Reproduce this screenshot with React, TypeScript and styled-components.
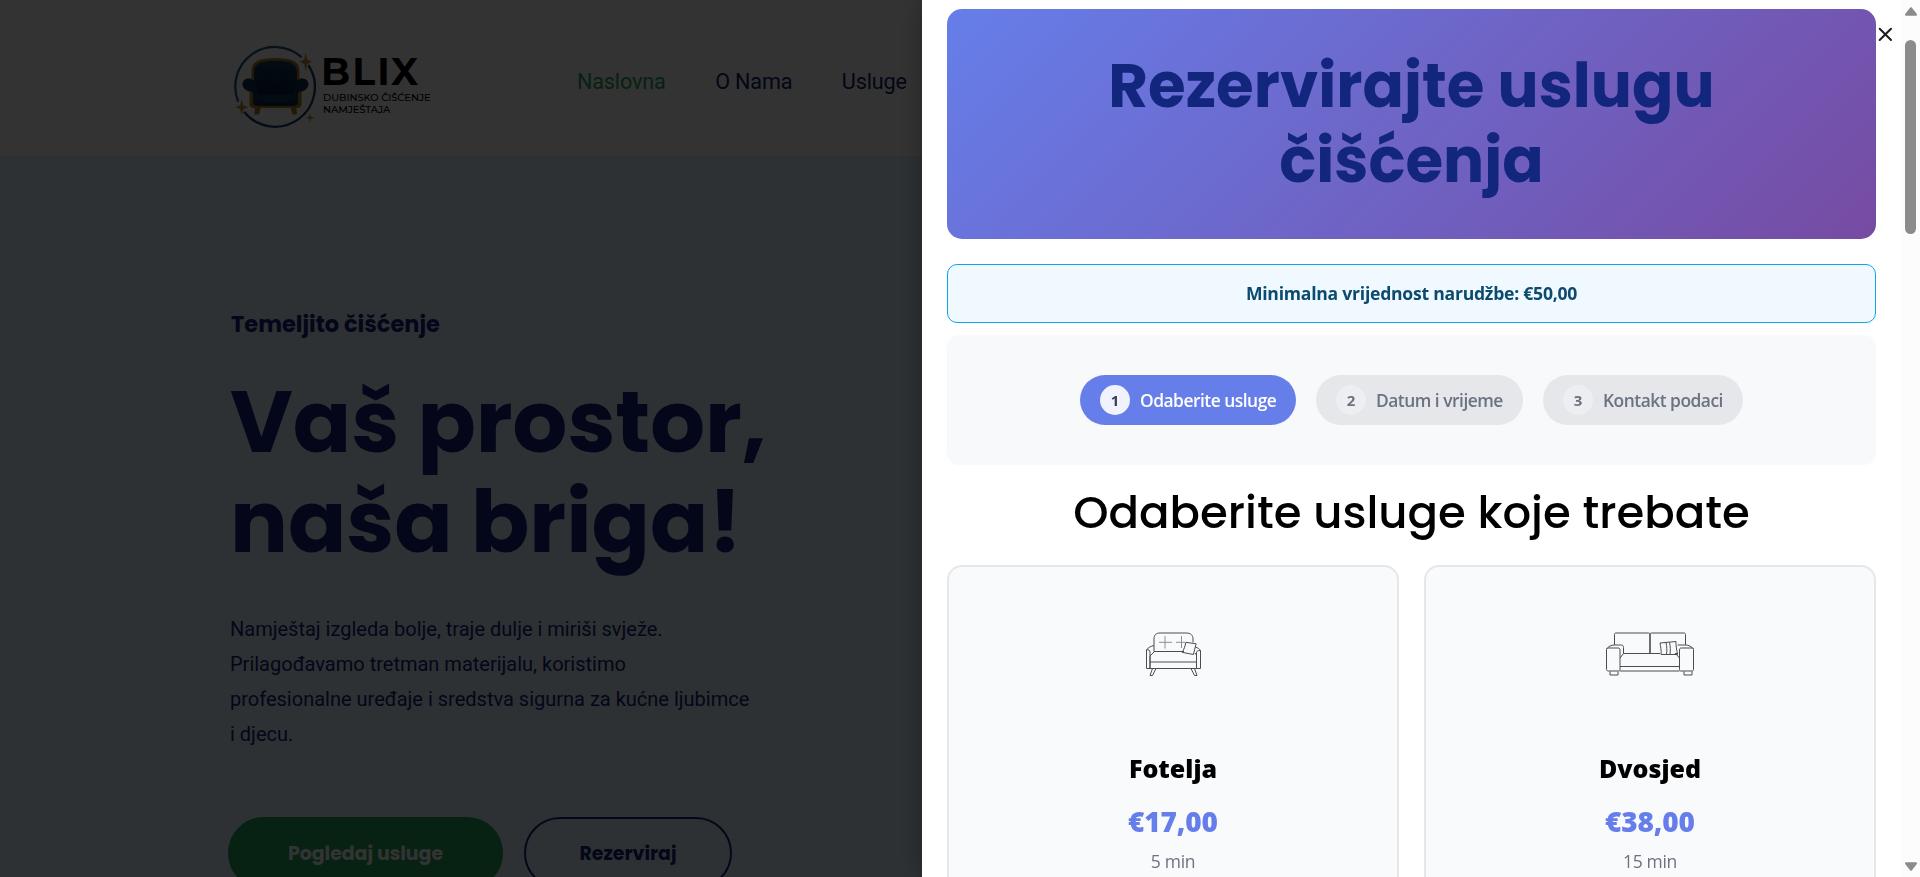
import React from 'react';
import styled, { createGlobalStyle } from 'styled-components';

const display = '"Poppins", "Inter", sans-serif';
const body = '"Roboto", sans-serif';
const system = '"Open Sans", "Noto Sans", sans-serif';

const GlobalStyle = createGlobalStyle`
  *, *::before, *::after { box-sizing: border-box; }
  html, body { margin: 0; padding: 0; height: 877px; overflow: hidden; background: #fff; }
  h1, h2, h3, p { margin: 0; }
`;

/* ---------- landing page ---------- */

const Page = styled.div`
  height: 877px;
  display: flex;
  flex-direction: column;
  overflow: hidden;
  color: #13267e;
`;

const Header = styled.header`
  flex: none;
  height: 156px;
  padding-left: 232px;
  display: flex;
  align-items: flex-start;
  background: #fff;
`;

const Brand = styled.div`
  display: flex;
  width: 345px;
  padding-top: 43px;
`;

const BrandWords = styled.div`
  margin-left: 7px;
  padding-top: 9px;
  color: #000;
  font-family: "Montserrat", "Inter", sans-serif;
  white-space: nowrap;
`;

const BrandName = styled.div`
  margin-left: -2px;
  font-size: 38px;
  font-weight: 700;
  line-height: 40px;
  letter-spacing: 2.1px;
`;

const BrandLine = styled.div`
  font-size: 10px;
  font-weight: 500;
  line-height: 12px;
  letter-spacing: -0.1px;
`;

const Nav = styled.nav`
  display: flex;
  gap: 49.5px;
  padding-top: 66px;
`;

const NavLink = styled.a<{ $active?: boolean }>`
  font: 400 21.6px/32px ${body};
  letter-spacing: -0.15px;
  white-space: nowrap;
  color: ${p => (p.$active ? '#23a35d' : '#0d1f70')};
`;

const Hero = styled.section`
  flex: 1;
  padding: 154px 0 0 230px;
  background: #e1f2fc;
`;

const Eyebrow = styled.p`
  padding-left: 1px;
  font: 700 22.5px/28px ${display};
`;

const HeroTitle = styled.h1`
  margin-top: 34px;
  font: 700 86px/100px ${display};
`;

const HeroText = styled.p`
  width: 521px;
  margin-top: 40px;
  font: 400 20px/35px ${body};
`;

const Actions = styled.div`
  display: flex;
  gap: 21px;
  margin: 65px 0 0 -2px;
`;

const PillButton = styled.button<{ $filled?: boolean; $width: number }>`
  width: ${p => p.$width}px;
  height: 72px;
  padding: 2px 0 0;
  border: 2px solid ${p => (p.$filled ? '#23a35d' : '#13267e')};
  border-radius: 36px;
  background: ${p => (p.$filled ? '#23a35d' : 'transparent')};
  color: ${p => (p.$filled ? '#fff' : '#13267e')};
  font: 700 18.9px/28px ${display};
`;

/* ---------- booking drawer ---------- */

const Backdrop = styled.div`
  position: fixed;
  inset: 0;
  background: rgba(0, 0, 0, 0.8);
`;

const Drawer = styled.aside`
  position: fixed;
  top: 0;
  right: 0;
  width: 998px;
  height: 877px;
  display: flex;
  overflow: hidden;
  background: #fff;
  box-shadow: 0 0 26px rgba(0, 0, 0, 0.3);
`;

const DrawerBody = styled.div`
  flex: 1;
  padding: 9px 25px 0;
  font-family: ${system};
`;

const Banner = styled.div`
  height: 230px;
  padding-top: 39px;
  border-radius: 15px;
  background: linear-gradient(135deg, #667eea 0%, #764ba2 100%);
  color: #13267e;
  text-align: center;
`;

const BannerTitle = styled.h2`
  font: 700 61px/75px ${display};
  letter-spacing: 0.08px;
`;

const Notice = styled.div`
  height: 59px;
  margin-top: 25px;
  border: 1px solid #0ea5e9;
  border-radius: 10px;
  background: #f0f9ff;
  color: #0c4a6e;
  text-align: center;
  font-size: 17.6px;
  font-weight: 680;
  line-height: 57px;
  letter-spacing: -0.25px;
`;

const Steps = styled.div`
  display: flex;
  justify-content: center;
  gap: 20px;
  height: 130px;
  margin-top: 12px;
  padding-top: 40px;
  border-radius: 12px;
  background: #f8f9fb;
`;

const Step = styled.div<{ $active?: boolean; $width: number }>`
  display: flex;
  align-items: center;
  gap: 10px;
  width: ${p => p.$width}px;
  height: 50px;
  padding-left: 20px;
  border-radius: 25px;
  white-space: nowrap;
  background: ${p => (p.$active ? '#667eea' : '#e5e7eb')};
  color: ${p => (p.$active ? '#fff' : '#6b7280')};
  font-size: 17.4px;
  font-weight: 600;
  letter-spacing: -0.5px;
`;

const StepNumber = styled.span<{ $active?: boolean }>`
  flex: none;
  width: 30px;
  height: 30px;
  border-radius: 50%;
  background: ${p => (p.$active ? 'rgba(255,255,255,.9)' : 'rgba(255,255,255,.3)')};
  color: ${p => (p.$active ? '#374151' : '#6b7280')};
  font-size: 15px;
  font-weight: 700;
  line-height: 30px;
  letter-spacing: 0;
  text-align: center;
`;

const SectionTitle = styled.h2`
  margin-top: 20px;
  color: #000;
  text-align: center;
  font: 500 45px/55px ${display};
`;

const Cards = styled.div`
  display: grid;
  grid-template-columns: 1fr 1fr;
  gap: 25px;
  margin-top: 25px;
`;

const Card = styled.article`
  display: flex;
  flex-direction: column;
  align-items: center;
  height: 420px;
  border: 2px solid #e5e7eb;
  border-radius: 15px;
  background: #f9fafc;
`;

const Picture = styled.div`
  display: flex;
  align-items: center;
  height: 100px;
  margin: 37px 1px 0 0;
  svg { display: block; }
`;

const CardTitle = styled.h3`
  margin-top: 46px;
  color: #000;
  font-size: 25px;
  font-weight: 800;
  line-height: 36px;
`;

const Price = styled.p`
  margin-top: 15px;
  color: #667eea;
  font-size: 28px;
  font-weight: 800;
  line-height: 40px;
  letter-spacing: -0.15px;
`;

const Duration = styled.p`
  margin-top: 7px;
  color: #6b7280;
  font-size: 17.5px;
  line-height: 26px;
  letter-spacing: -0.3px;
`;

const CloseButton = styled.button`
  position: absolute;
  top: 27px;
  right: 27px;
  width: 15px;
  height: 15px;
  padding: 0;
  border: 0;
  background: none;
  svg { display: block; }
`;

const Scrollbar = styled.div`
  flex: none;
  display: flex;
  flex-direction: column;
  align-items: center;
  width: 19px;
  padding: 6px 0 5px;
  background: #fcfcfc;
`;

const Thumb = styled.div`
  width: 11px;
  height: 194px;
  margin: 23px 0 auto;
  border-radius: 6px;
  background: #8b8b8b;
`;

const Logo = () => (
  <svg width="84" height="86" viewBox="0 0 84 86" fill="none">
    <defs>
      <linearGradient id="velvet" x1="0" y1="0" x2="0" y2="1">
        <stop offset="0" stopColor="#123f64" />
        <stop offset="1" stopColor="#051f3a" />
      </linearGradient>
    </defs>
    <path d="M69.600 14.200A39.700 39.700 0 0 0 6.200 58.600" stroke="#24577f" strokeWidth="2.3" />
    <path d="M76.300 22.100A39.700 39.700 0 0 1 12.100 68.700" stroke="#163f68" strokeWidth="2.3" />
    <path d="M23 62h6.500l-2.500 9.500h-4.500zM57.500 62H64l1 9.500h-4.500z" fill="#a97a20" />
    <path d="M19.500 36V27.500C19.500 17 30 15.300 43.500 15.300S67.500 17 67.500 27.500V36c5.500-1.500 9 2 8.500 6.500-.5 3.500-3 5.500-6.500 6.500v12c0 2.500-1.500 4-4.500 4H22c-3 0-4.500-1.500-4.500-4V49c-3.500-1-6-3-6.500-6.500C10.500 38 14 34.500 19.500 36z" fill="#a97a20" />
    <path d="M22 50V29c0-9.500 9-11.300 21.500-11.300S65 19.500 65 29v21z" fill="url(#velvet)" />
    <path d="M10.500 41.500c0-4 3-6 6.200-6s6 2.500 7 7l2.300 7.500h35l2.300-7.500c1-4.500 3.800-7 7-7s6.200 2 6.200 6c-.5 4-3.500 5.500-6.500 6.200L66 49.500V59c0 2.500-1.500 4-4.500 4h-36c-3 0-4.500-1.500-4.500-4v-9.500l-4-1.800c-3-.7-6-2.200-6.500-6.200z" fill="#0b3154" />
    <path d="M26 50.500h35V60H26z" fill="#0d365b" />
    <path d="M26 50.500h35M24.500 61h38" stroke="#051b33" />
    <path d="M27 25l7 8 9.500-10 9.500 10 7-8M27 41l7-8 9.500 11L53 33l7 8" stroke="#05203d" />
    <path d="M73.700 9.500l1.500 7 4.500 2.200-4.500 2.200-1.500 7-1.500-7-4.500-2.200 4.500-2.200zM9.700 56.500l1.500 5.800 5 2-5 2-1.500 6.200-1.500-6.200-5-2 5-2zM78 70.200l.9 3.400 3.400 1.100-3.400 1.100-.9 3.900-.9-3.900-3.400-1.100 3.400-1.100z" fill="#b98b32" />
  </svg>
);

const Armchair = () => (
  <svg width="56" height="46" viewBox="0 0 56 46" fill="none" stroke="#4b4c4e" strokeWidth="1">
    <path d="M9 20.500V8C9 4 11 2 15 2h26.500c4 0 6.500 2 6.500 6v3.500M9 20.500h30" />
    <path d="M9 14.500c-3 .8-6 1.800-7.500 4.500v18.500h3.500V21c0-2-1.500-2.500-3.500-2M5 25l4.500-4.500M50.500 16c2 .8 4 1.700 5 3.500v18h-4V21.500c0-1.500 1.500-2 4-2" />
    <path d="M5 25v12.500h46.500V24l-1.500-2M5 31h46.500" />
    <path d="M40.800 11.300l10.300 1.500-2.700 10.700-11.300-2.200c2-3 3-6 3.700-10z" />
    <path d="M7.500 37.500l-2.500 7h2.500l3.500-7M46 37.500l3.500 7H52l-2.500-7" />
    <path d="M20 5v12.500M14 11.300h13M36.500 5v12M31 11.300h9" stroke="#8d8f92" />
  </svg>
);

const Sofa = () => (
  <svg width="90" height="46" viewBox="0 0 90 46" fill="none" stroke="#4b4c4e" strokeWidth="1">
    <path d="M9.500 14V3.500c0-1 .5-1.500 1.500-1.500h32.500c1 0 1.500.5 1.500 1.500V22M45 3.500c0-1 .5-1.500 1.500-1.500H79c1 0 1.500.5 1.500 1.500V14M18.500 22.500H55M70 22.500h3" />
    <path d="M45 3v19" strokeWidth="1.200" />
    <path d="M15 40h59.500M15 35.500h59.500M15 26v12.500c0 1-.5 1.500-1.500 1.500h-10c-1 0-2-.5-2-1.500v-20c0-1 1-1.500 2-1.500H13c1.500 0 2 .5 2 2zM74.500 26v12.500c0 1 .5 1.500 1.500 1.500h11c1 0 1.500-.5 1.500-1.500v-20c0-1-.5-1.500-1.500-1.500H76.500c-1.500 0-2 .5-2 2z" />
    <path d="M1.500 18c2-2.500 4.500-4 8-4h6c2 0 3 .5 3 2.500v6L15 27M88.500 18c-2-2.500-5-4-8-4h-8M74.500 27L71 23" />
    <path d="M55 12l16-1.500c-.5 4 1 9 1.500 13H56c.5-4-.5-8-1-11.500zM61 11.500c1 4 1 8 .5 12M64.500 11.500c1 4 1 8 .5 12" />
    <path d="M5 40.500v3.500h8v-3.500M79 40.500v3.500h8v-3.500" />
  </svg>
);

const CloseIcon = () => (
  <svg width="15" height="15" viewBox="0 0 15 15" stroke="#1b1c1f" strokeWidth="2" strokeLinecap="round">
    <path d="M1.700 1.700l11.300 11.300M13 1.700L1.700 13" />
  </svg>
);

const Arrow = ({ down }: { down?: boolean }) => (
  <svg width="14" height="11" viewBox="0 0 14 11" fill="#8b8b8b" stroke="#8b8b8b" strokeWidth="2" strokeLinejoin="round">
    <path d={down ? 'M2 2.300h10L7 8.800z' : 'M2 8.700h10L7 2.200z'} />
  </svg>
);

const steps = [
  { label: 'Odaberite usluge', width: 216, active: true },
  { label: 'Datum i vrijeme', width: 207 },
  { label: 'Kontakt podaci', width: 200 },
];

const services = [
  { name: 'Fotelja', price: '€17,00', time: '5 min', icon: <Armchair /> },
  { name: 'Dvosjed', price: '€38,00', time: '15 min', icon: <Sofa /> },
];

export default function App() {
  return (
    <>
      <GlobalStyle />
      <Page>
        <Header>
          <Brand>
            <Logo />
            <BrandWords>
              <BrandName>BLIX</BrandName>
              <BrandLine>DUBINSKO ČIŠĆENJE</BrandLine>
              <BrandLine>NAMJEŠTAJA</BrandLine>
            </BrandWords>
          </Brand>
          <Nav>
            <NavLink $active>Naslovna</NavLink>
            <NavLink>O Nama</NavLink>
            <NavLink>Usluge</NavLink>
          </Nav>
        </Header>
        <Hero>
          <Eyebrow>Temeljito čišćenje</Eyebrow>
          <HeroTitle>Vaš prostor,<br />naša briga!</HeroTitle>
          <HeroText>
            Namještaj izgleda bolje, traje dulje i miriši svježe. Prilagođavamo tretman materijalu, koristimo
            profesionalne uređaje i sredstva sigurna za kućne ljubimce i djecu.
          </HeroText>
          <Actions>
            <PillButton $filled $width={275}>Pogledaj usluge</PillButton>
            <PillButton $width={208}>Rezerviraj</PillButton>
          </Actions>
        </Hero>
      </Page>
      <Backdrop />
      <Drawer>
        <DrawerBody>
          <Banner>
            <BannerTitle>Rezervirajte uslugu<br />čišćenja</BannerTitle>
          </Banner>
          <Notice>Minimalna vrijednost narudžbe: €50,00</Notice>
          <Steps>
            {steps.map((s, i) => (
              <Step key={s.label} $active={s.active} $width={s.width}>
                <StepNumber $active={s.active}>{i + 1}</StepNumber>
                {s.label}
              </Step>
            ))}
          </Steps>
          <SectionTitle>Odaberite usluge koje trebate</SectionTitle>
          <Cards>
            {services.map(s => (
              <Card key={s.name}>
                <Picture>{s.icon}</Picture>
                <CardTitle>{s.name}</CardTitle>
                <Price>{s.price}</Price>
                <Duration>{s.time}</Duration>
              </Card>
            ))}
          </Cards>
        </DrawerBody>
        <CloseButton aria-label="Zatvori"><CloseIcon /></CloseButton>
        <Scrollbar>
          <Arrow />
          <Thumb />
          <Arrow down />
        </Scrollbar>
      </Drawer>
    </>
  );
}
